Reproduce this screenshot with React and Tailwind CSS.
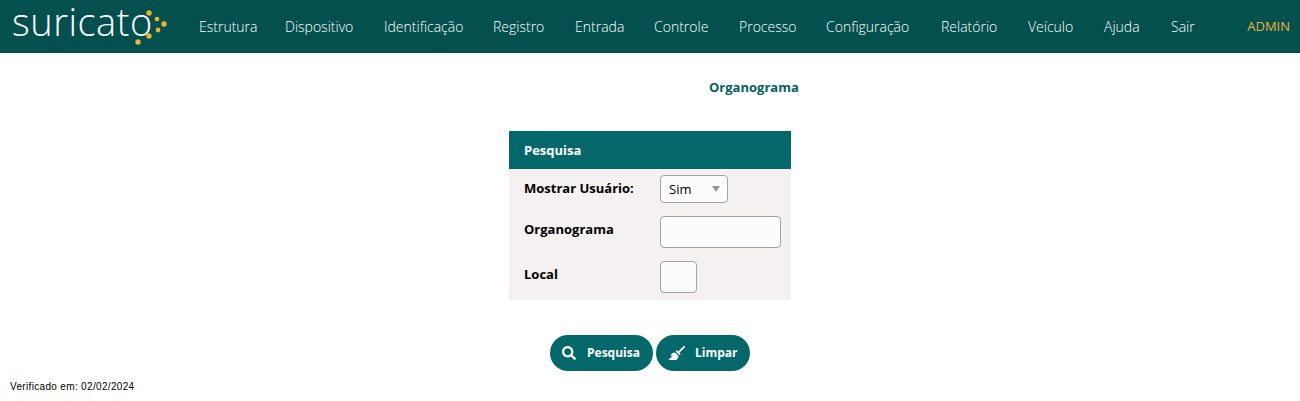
import React from 'react';
import { FaSearch } from 'react-icons/fa';
import { FaBroom } from 'react-icons/fa6';

const menu = [
    { label: 'Estrutura', width: 'w-[86px]' },
    { label: 'Dispositivo', width: 'w-[99px]' },
    { label: 'Identificação', width: 'w-[109px]' },
    { label: 'Registro', width: 'w-[82px]' },
    { label: 'Entrada', width: 'w-[79px]' },
    { label: 'Controle', width: 'w-[85px]' },
    { label: 'Processo', width: 'w-[87px]' },
    { label: 'Configuração', width: 'w-[115px]' },
    { label: 'Relatório', width: 'w-[87px]' },
    { label: 'Veículo', width: 'w-[76px]' },
    { label: 'Ajuda', width: 'w-[67px]' },
    { label: 'Sair', width: 'w-[40px]' },
];

const Logo = () => (
    <div className="relative w-[157px] h-[53px] ml-[12px] shrink-0">
        <span className="block text-[38px] leading-[43px] font-light text-white tracking-[0.5px]">suricato</span>
        <svg className="absolute left-[121px] top-[7px]" width="44" height="40" viewBox="0 0 44 40">
            <circle cx="16" cy="6" r="2.7" fill="#f0b429" />
            <circle cx="24" cy="12" r="2.3" fill="#f0b429" />
            <circle cx="31" cy="17" r="2.7" fill="#f0b429" />
            <circle cx="25" cy="23" r="2.4" fill="#f0b429" />
            <circle cx="16" cy="29" r="2.7" fill="#f0b429" />
            <circle cx="5" cy="35" r="2.7" fill="#f0b429" />
        </svg>
    </div>
);

const App = () => {
    return (
        <div className="h-[401px] bg-white overflow-hidden font-['Open_Sans',sans-serif]">
            {/* Top menu */}
            <div className="h-[53px] bg-[#03504e] flex items-center pr-[10px]">
                <Logo />
                <nav className="flex ml-[30px] text-[14px] font-light text-white">
                    {menu.map((item) => (
                        <a key={item.label} className={`${item.width} whitespace-nowrap`}>{item.label}</a>
                    ))}
                </nav>
                <span className="ml-auto text-[13px] text-[#f0b23a]">ADMIN</span>
            </div>

            <h1 className="ml-[709px] mt-[25px] text-[13px] leading-[18px] font-bold text-[#055e60] whitespace-nowrap">Organograma</h1>

            {/* Search form */}
            <div className="w-[282px] mx-auto mt-[35px]">
                <div className="h-[38px] bg-[#04686a] flex items-center px-[15px] pt-[2px] text-[13px] font-bold text-white">Pesquisa</div>
                <div className="h-[131px] bg-[#f4f1f0] pl-[15px] pt-[6px] text-[13px] font-bold text-black">
                    <div className="flex h-[28px]">
                        <label className="w-[136px] leading-[26px]">Mostrar Usuário:</label>
                        <div className="w-[68px] h-[28px] bg-[#fcfcfc] border border-[#a3a3a3] rounded-[4px] flex items-center justify-between pl-[8px] pr-[6px] pt-[2px] text-[13px] font-normal">
                            <span>Sim</span>
                            <span className="w-0 h-0 border-x-[4px] border-x-transparent border-t-[6px] border-t-[#999999] mr-[1px] -mt-[2px]"></span>
                        </div>
                    </div>
                    <div className="flex mt-[13px] h-[32px]">
                        <label className="w-[136px] leading-[26px]">Organograma</label>
                        <input className="w-[121px] h-[32px] bg-[#fcfcfc] border border-[#a3a3a3] rounded-[4px]" />
                    </div>
                    <div className="flex mt-[13px] h-[32px]">
                        <label className="w-[136px] leading-[26px]">Local</label>
                        <input className="w-[37px] h-[32px] bg-[#fcfcfc] border border-[#a3a3a3] rounded-[4px]" />
                    </div>
                </div>
            </div>

            {/* Buttons */}
            <div className="flex justify-center gap-[3px] mt-[35px]">
                <button className="w-[103px] h-[36px] rounded-full bg-[#04686a] text-white text-[12px] font-bold flex items-center pl-[12px]">
                    <FaSearch className="w-[14px] h-[14px] mr-[11px]" />
                    Pesquisa
                </button>
                <button className="w-[94px] h-[36px] rounded-full bg-[#04686a] text-white text-[12px] font-bold flex items-center pl-[13px]">
                    <FaBroom className="w-[16px] h-[16px] mr-[10px]" />
                    Limpar
                </button>
            </div>

            <p className="ml-[10px] mt-[10px] font-['Liberation_Sans',sans-serif] text-[10px] leading-[12px] tracking-[0.33px] text-black">Verificado em: 02/02/2024</p>
        </div>
    );
};

export default App;
